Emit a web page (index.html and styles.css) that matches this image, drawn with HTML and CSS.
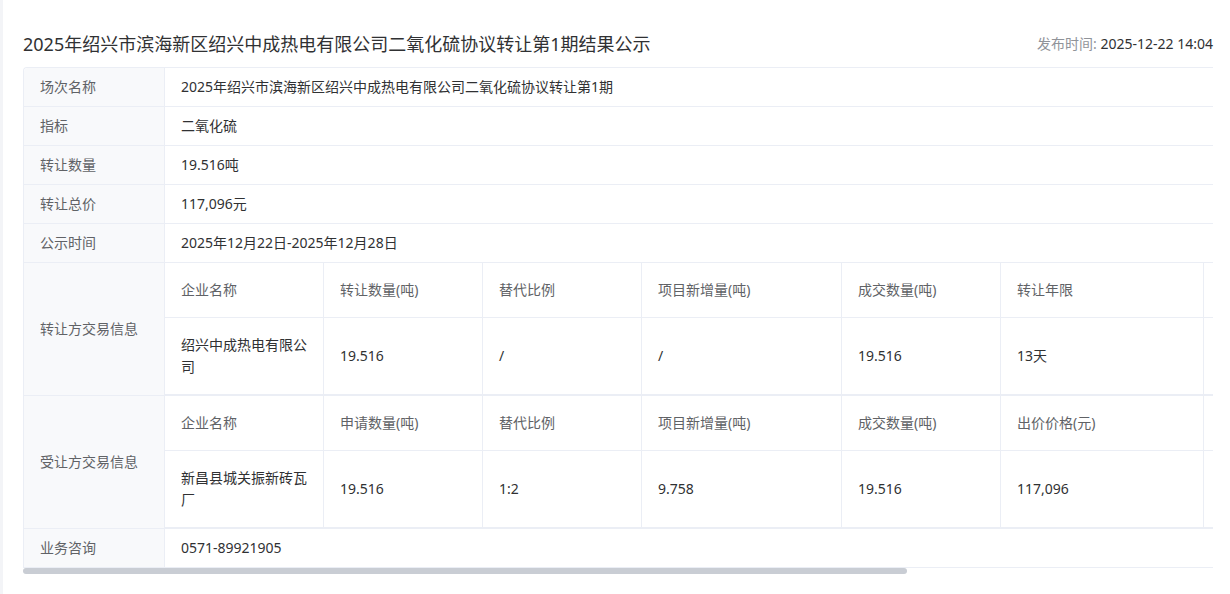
FILE: index.html
```html
<!DOCTYPE html>
<html lang="zh-CN">
<head>
<meta charset="utf-8">
<title>结果公示</title>
<link rel="stylesheet" href="styles.css">
</head>
<body>
<div class="page">
  <div class="head">
    <h1 class="title">2025年绍兴市滨海新区绍兴中成热电有限公司二氧化硫协议转让第1期结果公示</h1>
    <div class="date"><span class="date-label">发布时间:</span> 2025-12-22 14:04</div>
  </div>
  <div class="scroller">
    <table class="info">
      <colgroup><col class="c-label"><col></colgroup>
      <tr><th>场次名称</th><td>2025年绍兴市滨海新区绍兴中成热电有限公司二氧化硫协议转让第1期</td></tr>
      <tr><th>指标</th><td>二氧化硫</td></tr>
      <tr><th>转让数量</th><td>19.516吨</td></tr>
      <tr><th>转让总价</th><td>117,096元</td></tr>
      <tr><th>公示时间</th><td>2025年12月22日-2025年12月28日</td></tr>
      <tr>
        <th>转让方交易信息</th>
        <td class="nest">
          <table class="sub">
            <colgroup><col class="s1"><col class="s2"><col class="s3"><col class="s4"><col class="s5"><col class="s6"><col><col></colgroup>
            <tr class="sub-head"><td>企业名称</td><td>转让数量(吨)</td><td>替代比例</td><td>项目新增量(吨)</td><td>成交数量(吨)</td><td>转让年限</td><td></td><td></td></tr>
            <tr class="sub-data"><td>绍兴中成热电有限公司</td><td>19.516</td><td>/</td><td>/</td><td>19.516</td><td>13天</td><td></td><td></td></tr>
          </table>
        </td>
      </tr>
      <tr>
        <th>受让方交易信息</th>
        <td class="nest">
          <table class="sub">
            <colgroup><col class="s1"><col class="s2"><col class="s3"><col class="s4"><col class="s5"><col class="s6"><col><col></colgroup>
            <tr class="sub-head"><td>企业名称</td><td>申请数量(吨)</td><td>替代比例</td><td>项目新增量(吨)</td><td>成交数量(吨)</td><td>出价价格(元)</td><td></td><td></td></tr>
            <tr class="sub-data"><td>新昌县城关振新砖瓦厂</td><td>19.516</td><td>1:2</td><td>9.758</td><td>19.516</td><td>117,096</td><td></td><td></td></tr>
          </table>
        </td>
      </tr>
      <tr><th>业务咨询</th><td>0571-89921905</td></tr>
    </table>
  </div>
  <div class="scrollbar"><div class="thumb"></div></div>
</div>
</body>
</html>
```

FILE: styles.css
```css
html, body {
  margin: 0;
  padding: 0;
  background: #ffffff;
}

body {
  min-height: 100vh;
  box-sizing: border-box;
  border-left: 3px solid #f3f4f7;
  font-family: "Noto Sans", "Noto Sans CJK SC", sans-serif;
  color: #303133;
}

.page {
  padding: 32px 17px 0 20px;
}

.head {
  display: flex;
  justify-content: space-between;
  align-items: center;
  height: 24px;
  margin-bottom: 11px;
}

.title {
  margin: 0;
  font-size: 18px;
  font-weight: 400;
  line-height: 24px;
  color: #303133;
  white-space: nowrap;
}

.date {
  font-size: 14px;
  line-height: 24px;
  color: #303133;
  white-space: nowrap;
}

.date-label {
  color: #909399;
}

.scroller {
  overflow: hidden;
}

.scrollbar {
  height: 6px;
}

.thumb {
  width: 884px;
  height: 6px;
  background: #c9cdd4;
  border-radius: 3px;
}

.info {
  width: 1600px;
  table-layout: fixed;
  border-collapse: separate;
  border-spacing: 0;
  border-top: 1px solid #ebeef5;
  border-left: 1px solid #ebeef5;
  border-top-left-radius: 4px;
}

.c-label {
  width: 141px;
}

.info > tbody > tr > th,
.info > tbody > tr > td {
  border-right: 1px solid #ebeef5;
  border-bottom: 1px solid #ebeef5;
  padding: 8px 16px;
  font-size: 14px;
  line-height: 22px;
  text-align: left;
  font-weight: 400;
  vertical-align: middle;
}

.info > tbody > tr > th {
  background: #f8f9fb;
  color: #606266;
}

.info > tbody > tr:first-child > th {
  border-top-left-radius: 4px;
}

.info > tbody > tr > td {
  color: #303133;
}

.info > tbody > tr > td.nest {
  padding: 0;
}

.sub {
  width: 100%;
  table-layout: fixed;
  border-collapse: separate;
  border-spacing: 0;
}

.s1 { width: 159px; }
.s2 { width: 159px; }
.s3 { width: 159px; }
.s4 { width: 200px; }
.s5 { width: 159px; }
.s6 { width: 203px; }

.sub td {
  border-right: 1px solid #ebeef5;
  border-bottom: 1px solid #ebeef5;
  padding: 16px 14px 16px 16px;
  font-size: 14px;
  line-height: 22px;
  text-align: left;
  vertical-align: middle;
}

.sub-head td {
  color: #606266;
}

.sub-data td {
  color: #303133;
}
```
